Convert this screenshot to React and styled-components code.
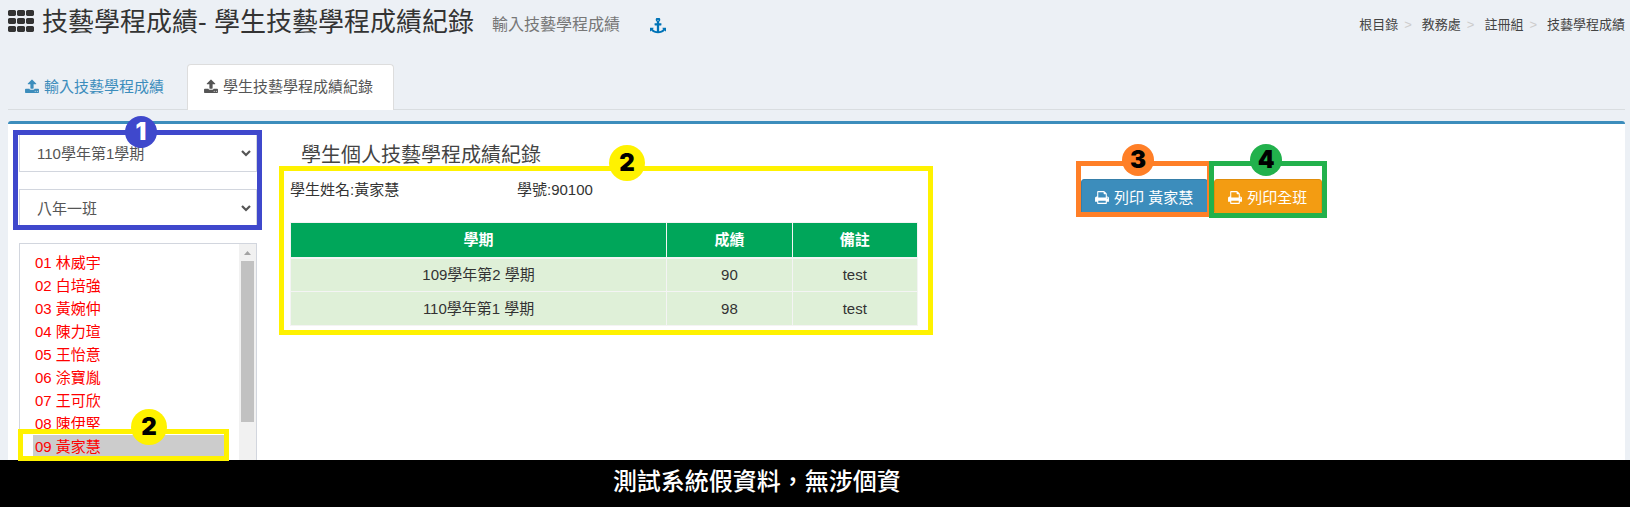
import React from "react";
import styled, { createGlobalStyle } from "styled-components";

const GlobalStyle = createGlobalStyle`
  *, *::before, *::after { box-sizing: border-box; }
  body {
    margin: 0;
    background: #ecf0f5;
    color: #333;
    font-family: "Liberation Sans", "Noto Sans CJK TC", sans-serif;
    font-size: 15px;
    line-height: 23px;
  }
  button, select { font: inherit; }
`;

const Page = styled.div`
  min-height: 100vh;
  display: flex;
  flex-direction: column;
`;

const Main = styled.main`
  flex: 1;
  display: flex;
  flex-direction: column;
  padding: 0 5px 0 8px;
`;

const Header = styled.header`
  display: flex;
  justify-content: space-between;
  align-items: center;
  margin-bottom: 20px;
`;

const TitleGroup = styled.div`
  display: flex;
  align-items: center;
  line-height: 44px;
`;

const Title = styled.h1`
  display: flex;
  align-items: center;
  gap: 8px;
  margin: 0 18px 0 0;
  font-size: 26px;
  font-weight: 400;
`;

const Subtitle = styled.small`
  padding-top: 6px;
  margin-right: 30px;
  font-size: 16px;
  line-height: 38px;
  color: #777;
`;

const AnchorLink = styled.a`
  display: flex;
  padding-top: 8px;
  color: #0073b7;
`;

const Crumbs = styled.ol`
  display: flex;
  gap: 10px;
  margin: 0;
  padding: 4px 0 0;
  list-style: none;
  font-size: 13px;
`;

const Crumb = styled.li`
  display: flex;
  gap: 6px;
  &:not(:last-child)::after {
    content: ">";
    color: #ccc;
  }
`;

const CrumbLink = styled.a`
  color: #444;
  text-decoration: none;
`;

const Tabs = styled.nav`
  display: flex;
  gap: 2px;
  height: 46px;
  margin-bottom: 11px;
  border-bottom: 1px solid #d9dde0;
`;

const Tab = styled.a`
  display: flex;
  align-items: center;
  gap: 5px;
  height: 46px;
  padding: 0 20px 2px 16px;
  border: 1px solid ${(p) => (p.$active ? "#ddd" : "transparent")};
  border-bottom: 0;
  border-radius: 4px 4px 0 0;
  background: ${(p) => (p.$active ? "#fff" : "transparent")};
  color: ${(p) => (p.$active ? "#555" : "#3c8dbc")};
  text-decoration: none;
`;

const Box = styled.div`
  flex: 1;
  display: grid;
  grid-template-columns: 238fr 758fr 533fr;
  column-gap: 33px;
  padding: 10px 11px 0;
  border-top: 3px solid #3c8dbc;
  border-radius: 3px 3px 0 0;
  background: #fff;
`;

const Sidebar = styled.aside`
  display: flex;
  flex-direction: column;
  gap: 16px;
`;

const Filters = styled.div`
  position: relative;
  display: flex;
  flex-direction: column;
  gap: 17px;
`;

const SelectWrap = styled.label`
  position: relative;
  display: block;
  color: #555;
`;

const Select = styled.select`
  display: block;
  width: 100%;
  height: 38px;
  padding: 0 28px 0 17px;
  border: 1px solid #d2d6de;
  border-radius: 0;
  background: #fff;
  color: inherit;
  appearance: none;
`;

const Caret = styled.svg`
  position: absolute;
  right: 6px;
  top: 16px;
  pointer-events: none;
`;

const ListBox = styled.div`
  display: flex;
  border: 1px solid #d2d6de;
  border-bottom: 0;
`;

const Students = styled.ul`
  flex: 1;
  margin: 0;
  padding: 7px 15px 2px 13px;
  list-style: none;
`;

const StudentItem = styled.li`
  position: relative;
`;

const Student = styled.button`
  display: block;
  width: 100%;
  height: 23px;
  padding: 0 2px;
  border: 0;
  background: ${(p) => (p.$selected ? "#ccc" : "transparent")};
  color: #f00;
  text-align: left;
  cursor: pointer;
`;

const ScrollTrack = styled.div`
  width: 17px;
  padding: 0 2px;
  background: #f1f1f1;
`;

const ScrollArrow = styled.svg`
  display: block;
  width: 13px;
  height: 17px;
`;

const ScrollThumb = styled.div`
  height: 161px;
  background: #c1c1c1;
`;

const Heading = styled.h2`
  margin: 6px 0 0 11px;
  font-size: 20px;
  font-weight: 400;
  line-height: 30px;
  color: #444;
`;

const Record = styled.section`
  position: relative;
  max-width: 628px;
  padding-top: 8px;
`;

const Info = styled.div`
  display: grid;
  grid-template-columns: 227fr 401fr;
  margin-bottom: 21px;
`;

const Table = styled.table`
  width: 100%;
  border-collapse: collapse;
  table-layout: fixed;
  text-align: center;
`;

const Th = styled.th`
  width: ${(p) => p.$width};
  height: 35px;
  padding: 0;
  border: 1px solid #f4f4f4;
  border-bottom-width: 2px;
  background: #00a65a;
  color: #fff;
`;

const Td = styled.td`
  height: 34px;
  padding: 0;
  border: 1px solid #f4f4f4;
  background: #dff0d8;
`;

const Actions = styled.div`
  display: flex;
  align-items: flex-start;
  gap: 6px;
  padding-top: 45px;
`;

const Action = styled.div`
  position: relative;
`;

const Button = styled.button`
  display: flex;
  align-items: center;
  gap: 5px;
  height: 36px;
  padding: 0 14px 0 13px;
  border: 1px solid ${(p) => (p.$warning ? "#e08e0b" : "#367fa9")};
  border-radius: 3px;
  background: ${(p) => (p.$warning ? "#f39c12" : "#3c8dbc")};
  color: #fff;
  white-space: nowrap;
  cursor: pointer;
`;

const Frame = styled.div`
  position: absolute;
  inset: ${(p) => p.$inset};
  z-index: 1;
  border: 5px solid ${(p) => p.$color};
  pointer-events: none;
`;

const Badge = styled.span`
  position: absolute;
  top: ${(p) => p.$top};
  left: ${(p) => p.$left};
  width: ${(p) => p.$size}px;
  height: ${(p) => p.$size}px;
  border-radius: 50%;
  background: ${(p) => p.$color};
  color: ${(p) => p.$ink || "#000"};
  font-family: "Inter", sans-serif;
  font-size: 24px;
  font-weight: 900;
  line-height: ${(p) => p.$size}px;
  text-align: center;
`;

const Notice = styled.footer`
  padding: 0 16px 3px 37.6%;
  background: #000;
  color: #fff;
  font-size: 24px;
  font-weight: 500;
  line-height: 44px;
`;

const GLYPHS = {
  th: "M512 1248v192q0 40-28 68t-68 28h-320q-40 0-68-28t-28-68v-192q0-40 28-68t68-28h320q40 0 68 28t28 68zM512 736v192q0 40-28 68t-68 28h-320q-40 0-68-28t-28-68v-192q0-40 28-68t68-28h320q40 0 68 28t28 68zM1088 1248v192q0 40-28 68t-68 28h-320q-40 0-68-28t-28-68v-192q0-40 28-68t68-28h320q40 0 68 28t28 68zM512 224v192q0 40-28 68t-68 28h-320q-40 0-68-28t-28-68v-192q0-40 28-68t68-28h320q40 0 68 28t28 68zM1088 736v192q0 40-28 68t-68 28h-320q-40 0-68-28t-28-68v-192q0-40 28-68t68-28h320q40 0 68 28t28 68zM1664 1248v192q0 40-28 68t-68 28h-320q-40 0-68-28t-28-68v-192q0-40 28-68t68-28h320q40 0 68 28t28 68zM1088 224v192q0 40-28 68t-68 28h-320q-40 0-68-28t-28-68v-192q0-40 28-68t68-28h320q40 0 68 28t28 68zM1664 736v192q0 40-28 68t-68 28h-320q-40 0-68-28t-28-68v-192q0-40 28-68t68-28h320q40 0 68 28t28 68zM1664 224v192q0 40-28 68t-68 28h-320q-40 0-68-28t-28-68v-192q0-40 28-68t68-28h320q40 0 68 28t28 68z",
  upload:
    "M1280 1472q0-26-19-45t-45-19-45 19-19 45 19 45 45 19 45-19 19-45zM1536 1472q0-26-19-45t-45-19-45 19-19 45 19 45 45 19 45-19 19-45zM1664 1248v320q0 40-28 68t-68 28h-1472q-40 0-68-28t-28-68v-320q0-40 28-68t68-28h427q21 56 70.5 92t110.5 36h256q61 0 110.5-36t70.5-92h427q40 0 68 28t28 68zM1339 600q-17 40-59 40h-256v448q0 26-19 45t-45 19h-256q-26 0-45-19t-19-45v-448h-256q-42 0-59-40-17-39 14-69l448-448q18-19 45-19t45 19l448 448q31 30 14 69z",
  print:
    "M384 1536h896v-256h-896v256zM384 896h896v-384h-160q-40 0-68-28t-28-68v-160h-640v640zM1536 960q0-26-19-45t-45-19-45 19-19 45 19 45 45 19 45-19 19-45zM1664 960v416q0 13-9.5 22.5t-22.5 9.5h-224v160q0 40-28 68t-68 28h-960q-40 0-68-28t-28-68v-160h-224q-13 0-22.5-9.5t-9.5-22.5v-416q0-79 56.5-135.5t135.5-56.5h64v-544q0-40 28-68t68-28h672q40 0 88 20t76 48l152 152q28 28 48 76t20 88v256h64q79 0 135.5 56.5t56.5 135.5z",
  anchor:
    "M960 256q0-26-19-45t-45-19-45 19-19 45 19 45 45 19 45-19 19-45zM1792 1120v352q0 22-20 30-8 2-12 2-13 0-23-9l-93-93q-119 143-318.5 226.5t-429.5 83.5-429.5-83.5-318.5-226.5l-93 93q-9 9-23 9-4 0-12-2-20-8-20-30v-352q0-14 9-23t23-9h352q22 0 30 20 8 19-7 35l-100 100q67 91 189.5 153.5t271.5 82.5v-647h-192q-26 0-45-19t-19-45v-128q0-26 19-45t45-19h192v-163q-58-34-93-92.5t-35-128.5q0-106 75-181t181-75 181 75 75 181q0 70-35 128.5t-93 92.5v163h192q26 0 45 19t19 45v128q0 26-19 45t-45 19h-192v647q149-20 271.5-82.5t189.5-153.5l-100-100q-15-16-7-35 8-20 30-20h352q14 0 23 9t9 23z",
};

function Icon({ name, width, height }) {
  const box = name === "anchor" ? "0 0 1792 1792" : "0 0 1664 1792";
  return (
    <svg width={width} height={height} viewBox={box} fill="currentColor" aria-hidden="true">
      <path d={GLYPHS[name]} />
    </svg>
  );
}

function Dropdown({ label, value }) {
  return (
    <SelectWrap>
      <Select aria-label={label} defaultValue={value}>
        <option>{value}</option>
      </Select>
      <Caret width="10" height="7" viewBox="0 0 10 7" fill="none" stroke="currentColor" strokeWidth="2.2">
        <path d="M1 1l4 4 4-4" />
      </Caret>
    </SelectWrap>
  );
}

const STUDENTS = ["林威宇", "白培強", "黃婉仲", "陳力瑄", "王怡意", "涂寶胤", "王可欣", "陳伊堅", "黃家慧"];
const SELECTED = "黃家慧";
const CRUMBS = ["根目錄", "教務處", "註冊組", "技藝學程成績"];
const SCORES = [
  { term: "109學年第2 學期", score: 90, note: "test" },
  { term: "110學年第1 學期", score: 98, note: "test" },
];

export default function App() {
  return (
    <Page>
      <GlobalStyle />
      <Main>
        <Header>
          <TitleGroup>
            <Title>
              <Icon name="th" width={26} height={28} />
              技藝學程成績- 學生技藝學程成績紀錄
            </Title>
            <Subtitle>輸入技藝學程成績</Subtitle>
            <AnchorLink href="#anchor" aria-label="錨點">
              <Icon name="anchor" width={16} height={16} />
            </AnchorLink>
          </TitleGroup>
          <Crumbs>
            {CRUMBS.map((c) => (
              <Crumb key={c}>
                <CrumbLink href="#">{c}</CrumbLink>
              </Crumb>
            ))}
          </Crumbs>
        </Header>

        <Tabs>
          <Tab href="#input">
            <Icon name="upload" width={14} height={15} />
            輸入技藝學程成績
          </Tab>
          <Tab href="#record" $active>
            <Icon name="upload" width={14} height={15} />
            學生技藝學程成績紀錄
          </Tab>
        </Tabs>

        <Box>
          <Sidebar>
            <Filters>
              <Dropdown label="學期" value="110學年第1學期" />
              <Dropdown label="班級" value="八年一班" />
              <Frame $inset="-4px -5px -3px -6px" $color="#3f48cc">
                <Badge $top="-19px" $left="107px" $size={32} $color="#3f48cc" $ink="#fff">1</Badge>
              </Frame>
            </Filters>
            <ListBox>
              <Students>
                {STUDENTS.map((name, i) => (
                  <StudentItem key={name}>
                    <Student type="button" $selected={name === SELECTED}>
                      {`0${i + 1} ${name}`}
                    </Student>
                    {name === SELECTED && (
                      <Frame $inset="-6px -5px -3px -15px" $color="#fff200">
                        <Badge $top="-25px" $left="108px" $size={36} $color="#fff200">2</Badge>
                      </Frame>
                    )}
                  </StudentItem>
                ))}
              </Students>
              <ScrollTrack>
                <ScrollArrow viewBox="0 0 13 17" fill="#a3a3a3">
                  <path d="M3 11l3.5-4 3.5 4z" />
                </ScrollArrow>
                <ScrollThumb />
              </ScrollTrack>
            </ListBox>
          </Sidebar>

          <div>
            <Heading>學生個人技藝學程成績紀錄</Heading>
            <Record>
              <Info>
                <span>學生姓名:黃家慧</span>
                <span>學號:90100</span>
              </Info>
              <Table>
                <thead>
                  <tr>
                    <Th $width="60%">學期</Th>
                    <Th $width="20%">成績</Th>
                    <Th $width="20%">備註</Th>
                  </tr>
                </thead>
                <tbody>
                  {SCORES.map((row) => (
                    <tr key={row.term}>
                      <Td>{row.term}</Td>
                      <Td>{row.score}</Td>
                      <Td>{row.note}</Td>
                    </tr>
                  ))}
                </tbody>
              </Table>
              <Frame $inset="-4px -15px -9px -11px" $color="#fff200">
                <Badge $top="-26px" $left="325px" $size={36} $color="#fff200">2</Badge>
              </Frame>
            </Record>
          </div>

          <Actions>
            <Action>
              <Button type="button">
                <Icon name="print" width={14} height={15} />
                列印 黃家慧
              </Button>
              <Frame $inset="-18px -4px -2px -5px" $color="#ff7f27">
                <Badge $top="-22px" $left="41px" $size={32} $color="#ff7f27">3</Badge>
              </Frame>
            </Action>
            <Action>
              <Button type="button" $warning>
                <Icon name="print" width={14} height={15} />
                列印全班
              </Button>
              <Frame $inset="-18px -5px -3px -5px" $color="#22b14c">
                <Badge $top="-22px" $left="36px" $size={32} $color="#22b14c">4</Badge>
              </Frame>
            </Action>
          </Actions>
        </Box>
      </Main>
      <Notice>測試系統假資料，無涉個資</Notice>
    </Page>
  );
}
